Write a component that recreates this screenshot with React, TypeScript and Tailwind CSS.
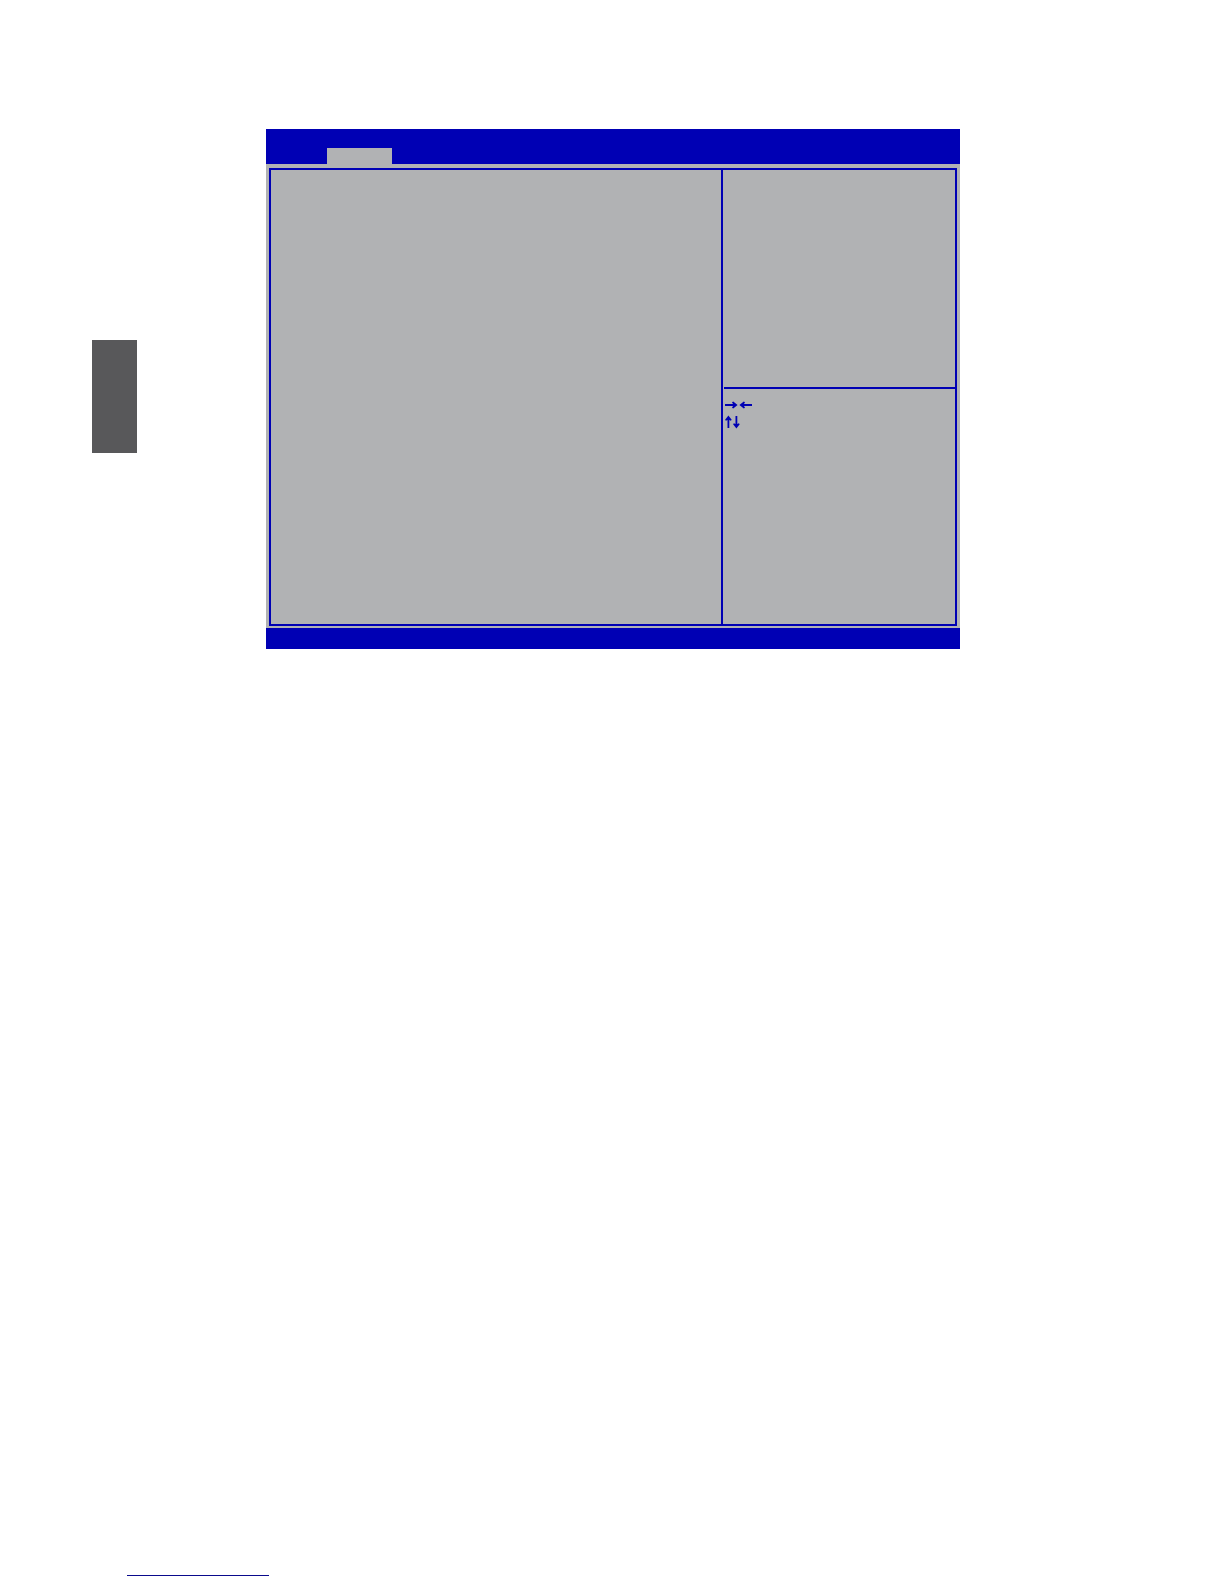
import { clsx } from "clsx";

type Direction = "right" | "left" | "up" | "down";

const ARROWS: Record<Direction, string> = {
    right: "M0 5H8L7 3.2L8.2 2.4L12.6 6L8.2 9.6L7 8.8L8 7H0Z",
    left: "M12 5H4L5 3.2L3.8 2.4L-0.6 6L3.8 9.6L5 8.8L4 7H12Z",
    up: "M5.1 12V4L3.5 4.8L2.7 3.8L6 -0.4L9.3 3.8L8.5 4.8L6.9 4V12Z",
    down: "M5.1 0V8L3.5 7.2L2.7 8.2L6 12.4L9.3 8.2L8.5 7.2L6.9 8V0Z",
};

function Arrow({ direction, className }: { direction: Direction; className?: string }) {
    return (
        <svg
            viewBox={direction === "up" || direction === "down" ? "2.6 0 8 12" : "0 0 12 12"}
            className={clsx("h-3 shrink-0 overflow-visible fill-[#0000b4]", className)}
            aria-hidden="true"
        >
            <path d={ARROWS[direction]} />
        </svg>
    );
}

function KeyHints() {
    return (
        <section className="flex flex-1 flex-col gap-[5px] px-[2px] pt-[10px]">
            <div className="flex gap-[3px]">
                <Arrow direction="right" className="w-3" />
                <Arrow direction="left" className="w-3" />
            </div>
            <div className="flex">
                <Arrow direction="up" className="w-2" />
                <Arrow direction="down" className="w-2" />
            </div>
        </section>
    );
}

function SetupScreen() {
    return (
        <section className="flex min-w-0 flex-1 flex-col bg-[#b1b2b4]">
            <header className="flex h-[35px] items-end bg-[#0000b4] pl-[61px]">
                <div className="h-4 w-[65px] bg-[#b1b2b4]" />
            </header>
            <div className="flex flex-1 px-[3px] pt-1 pb-[2px]">
                <div className="flex min-h-[458px] flex-1 border-2 border-[#0000b4]">
                    <div className="flex-1" />
                    <aside className="flex w-[234px] flex-col border-l-2 border-[#0000b4]">
                        <div className="ml-px h-[219px] border-b-2 border-[#0000b4]" />
                        <KeyHints />
                    </aside>
                </div>
            </div>
            <footer className="h-[21px] bg-[#0000b4]" />
        </section>
    );
}

export default function App() {
    return (
        <div className="flex min-h-screen flex-col bg-white">
            <main className="flex items-start pt-[129px] pr-[264px] pl-[92px]">
                <div className="mt-[211px] mr-[129px] h-[113px] w-[45px] shrink-0 bg-[#58585a]" />
                <SetupScreen />
            </main>
            <footer className="mt-auto px-[127px] pb-2">
                <div className="w-[142px] border-t border-[#0a0a8c]" />
            </footer>
        </div>
    );
}
